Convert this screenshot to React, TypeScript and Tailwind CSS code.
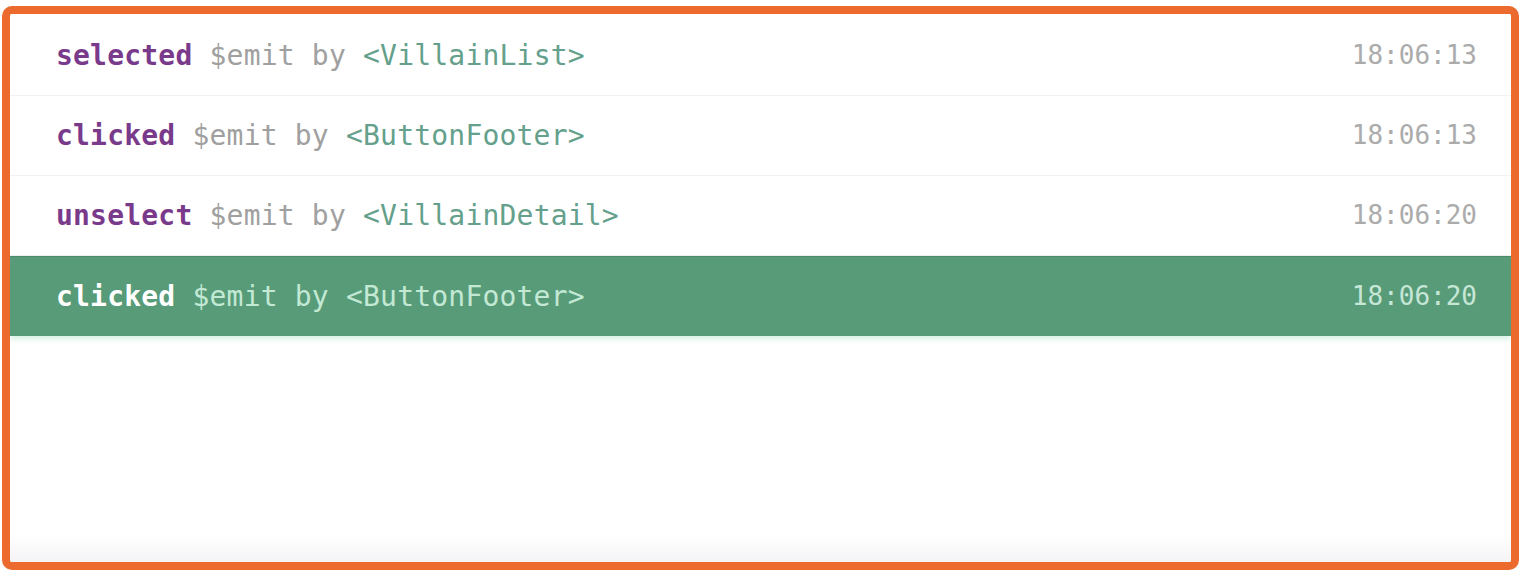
import React from 'react';

interface EmitEvent {
  name: string;
  component: string;
  time: string;
}

const events: EmitEvent[] = [
  { name: 'selected', component: 'VillainList', time: '18:06:13' },
  { name: 'clicked', component: 'ButtonFooter', time: '18:06:13' },
  { name: 'unselect', component: 'VillainDetail', time: '18:06:20' },
  { name: 'clicked', component: 'ButtonFooter', time: '18:06:20' },
];

const SELECTED = 3;

export default function App() {
  return (
    <div className="w-[1521px] h-[580px] bg-white overflow-hidden pt-[6px] pl-[2px]">
      <div className="w-[1517px] h-[564px] border-[8px] border-[#ec6a2e] rounded-[10px] overflow-hidden">
        <div
          className="h-full pt-[2px] bg-[linear-gradient(to_bottom,#ffffff_95%,#f4f4f6)]"
          style={{ fontFamily: '"DejaVu Sans Mono", "Liberation Mono", monospace' }}
        >
          {events.map((e, i) => {
            const active = i === SELECTED;
            return (
              <div
                key={i}
                className={`h-[80px] flex items-center justify-between pl-[46px] pr-[34px] ${
                  active
                    ? 'bg-[#589b79] border-t border-[#4d8a6c] shadow-[0_3px_6px_rgba(90,190,140,0.25)]'
                    : 'border-b border-[#f2f2f2]'
                }`}
              >
                <div className="whitespace-nowrap text-[28px] tracking-[0.2px]">
                  <span className={`font-bold ${active ? 'text-white' : 'text-[#7a3a8b]'}`}>{e.name}</span>
                  <span className={active ? 'text-[#c3e9d5]' : 'text-[#a0a0a0]'}> $emit by </span>
                  <span className={active ? 'text-[#c3e9d5]' : 'text-[#64a08b]'}>&lt;{e.component}&gt;</span>
                </div>
                <span className={`text-[26px] ${active ? 'text-[#c6e7d6]' : 'text-[#ababab]'}`}>{e.time}</span>
              </div>
            );
          })}
        </div>
      </div>
    </div>
  );
}
